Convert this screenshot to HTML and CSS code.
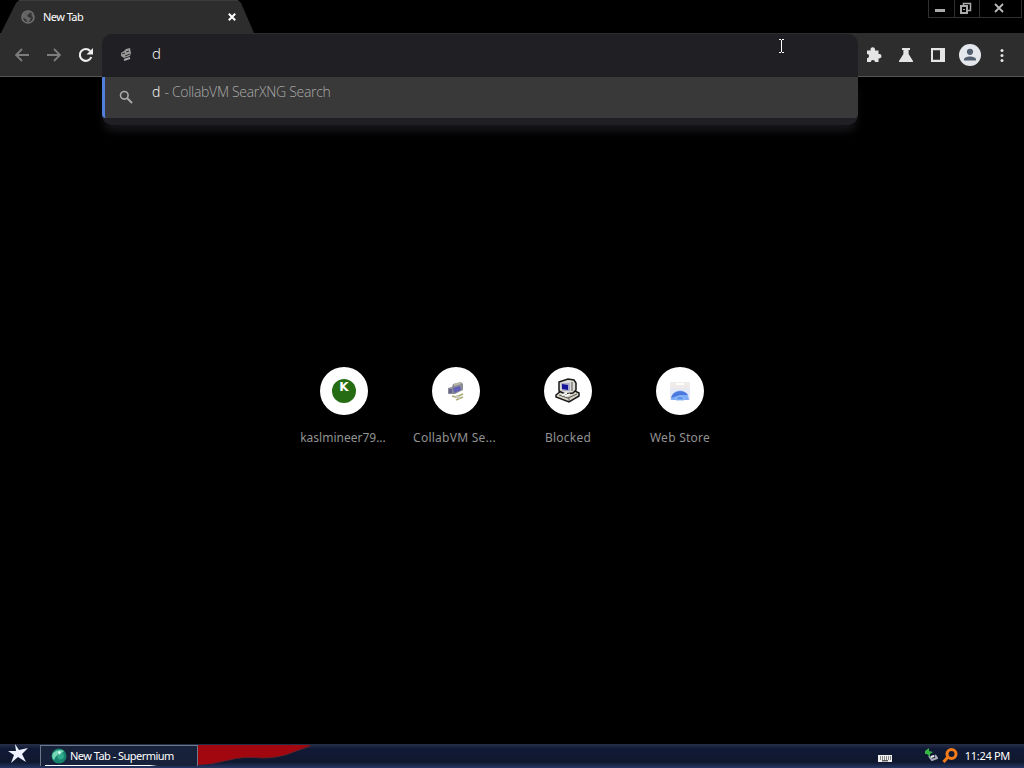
FILE: index.html
```
<!DOCTYPE html>
<html lang="en">
<head>
    <meta charset="UTF-8">
    <meta name="viewport" content="width=device-width, initial-scale=1.0">
    <title>New Tab</title>
    <link rel="stylesheet" href="styles.css">
</head>
<body>
<div class="titlebar">
    <svg class="tab-shape" width="256" height="33" viewBox="0 0 256 33"><path d="M0 33 L1 33 L16 3 Q18 0 21 0 H236 Q239 0 241 3 L254 33Z" fill="#2d2d2d"/><path d="M19 .5H238" stroke="#3b3b3b"/></svg>
    <div class="tab">
        <svg width="14" height="14" viewBox="0 0 14 14"><circle cx="7" cy="7" r="6" fill="#333" stroke="#707070" stroke-width="1.6"/><path d="M2 4 6 2 9 2 8 4 6 5 7 7 10 8 8 12 6 12 5 9 2 8Z" fill="#656565"/><path d="M10 4 13 5 12 8Z" fill="#656565"/></svg>
        <span class="tab-title">New Tab</span>
        <svg class="tab-close" width="8" height="8" viewBox="0 0 8 8"><path d="M.8.8 7.2 7.2M7.2.8.8 7.2" stroke="#fff" stroke-width="2"/></svg>
    </div>
    <div class="window-buttons">
        <div class="win-btn"><svg width="25" height="17" viewBox="0 0 25 17"><path d="M6 10.5H16" stroke="#aaa" stroke-width="3"/></svg></div>
        <div class="win-btn"><svg width="24" height="17" viewBox="0 0 24 17"><path d="M8.5 6V3.5H15.5V10.5H13" fill="none" stroke="#aaa" stroke-width="1.5"/><rect x="6" y="6" width="6" height="7" fill="#000" stroke="#aaa" stroke-width="2"/><path d="M8 9.5H10" stroke="#aaa"/></svg></div>
        <div class="win-btn wide"><svg width="41" height="17" viewBox="0 0 41 17"><path d="M15 4 23 12M23 4 15 12" stroke="#bbb" stroke-width="1.8"/></svg></div>
    </div>
</div>

<div class="toolbar">
    <div class="nav">
        <svg width="16" height="16" viewBox="0 0 16 16"><path d="M15 8H2M8 2 2 8 8 14" fill="none" stroke="#7c7c7c" stroke-width="1.8"/></svg>
        <svg width="16" height="16" viewBox="0 0 16 16"><path d="M1 8H14M8 2 14 8 8 14" fill="none" stroke="#7c7c7c" stroke-width="1.8"/></svg>
        <svg width="16" height="16" viewBox="0 0 16 16"><path d="M13.3 10A5.9 5.9 0 1 1 12.2 4" fill="none" stroke="#eee" stroke-width="2.1"/><path d="M15 1V7.5H8.5Z" fill="#eee"/></svg>
    </div>
    <div class="omnibox">
        <svg width="16" height="16" viewBox="0 0 16 16"><path d="M3 6 6 4 8 2 12 1 13 6 12 9 6 11 3 9Z" fill="#999"/><path d="M4 7 7 6M7 9 12 7M8 5 11 4" stroke="#333"/><path d="M6 13 12 11" stroke="#aaa" stroke-width="2"/></svg>
        <span class="query">d</span>
    </div>
    <div class="actions">
        <svg width="16" height="16" viewBox="0 0 16 16"><path d="M1 3.5H4.7A2.3 2.3 0 1 1 8.8 3.5H12.5V7A2.3 2.3 0 1 1 12.5 11.4V15H9A2.1 2.1 0 0 0 4.8 15H1V11.2A2.1 2.1 0 0 0 1 7Z" fill="#e5e5e5"/></svg>
        <svg width="16" height="16" viewBox="0 0 16 16"><path d="M4 1H12V3H10.6V7L15 14V15H1V14L5.4 7V3H4Z" fill="#e5e5e5"/></svg>
        <svg width="16" height="16" viewBox="0 0 16 16"><path d="M1 1H15V15H1ZM3 3.2V12.8H10V3.2Z" fill="#e5e5e5" fill-rule="evenodd"/></svg>
        <svg class="avatar" width="22" height="22" viewBox="0 0 22 22"><circle cx="11" cy="11" r="11" fill="#e4e7ec"/><circle cx="11" cy="7.8" r="3.1" fill="#525f70"/><path d="M5 16.5V15.5C5 11.5 17 11.5 17 15.5V16.5Z" fill="#525f70"/></svg>
        <svg class="menu" width="4" height="16" viewBox="0 0 4 16"><g fill="#e5e5e5"><circle cx="2" cy="3.5" r="1.5"/><circle cx="2" cy="8.5" r="1.5"/><circle cx="2" cy="13.5" r="1.5"/></g></svg>
    </div>
    <div class="suggestions">
        <div class="suggestion">
            <svg width="14" height="14" viewBox="0 0 14 14"><circle cx="5.3" cy="5.3" r="3.8" fill="none" stroke="#aaa" stroke-width="1.6"/><path d="M8 8 13 13" stroke="#aaa" stroke-width="2"/></svg>
            <p><span class="typed">d</span><span class="engine"> - CollabVM SearXNG Search</span></p>
        </div>
    </div>
</div>
<svg class="text-cursor" width="7" height="14" viewBox="0 0 7 14"><path d="M1 .5H3M4 .5H6M3.5 1V13M1 13.5H3M4 13.5H6" stroke="#fff"/></svg>

<main class="new-tab">
    <div class="shortcut">
        <div class="circle"><div class="letter-icon">K</div></div>
        <span class="tight">kaslmineer79...</span>
    </div>
    <div class="shortcut">
        <div class="circle"><svg width="24" height="24" viewBox="0 0 24 24"><path d="M4 9 8 8 9 5 17 3 19 5V11L11 15 4 15Z" fill="#8b8d96"/><path d="M9 9 16 7 17 11 10 14Z" fill="#6260b6"/><path d="M5 10 8 10V14L5 14Z" fill="#66658f"/><path d="M10 6 17 4" stroke="#b9b9a5" stroke-width="2"/><path d="M8 17 12 18 19 15M12 21 19 18" fill="none" stroke="#acac77" stroke-width="1.7"/><path d="M12 17 16 19" stroke="#c9cbc5" stroke-width="2"/></svg></div>
        <span class="searx">CollabVM Se...</span>
    </div>
    <div class="shortcut">
        <div class="circle"><svg width="26" height="26" viewBox="0 0 26 26"><path d="M1 17 6 13 18 12 24 15V18L14 24 1 19Z" fill="#ddd9c8" stroke="#171717" stroke-width="1.5"/><path d="M4 4 13 1 19 2 21 5V12L18 15 10 16 4 13Z" fill="#deddd5" stroke="#171717" stroke-width="1.5"/><path d="M6 5 15 5 15 13 7 13Z" fill="#aaaaca"/><path d="M7 6 13 7V12L7 11Z" fill="#16169b"/><path d="M17 4V13M4 17 13 20 22 16M14 20V23" fill="none" stroke="#666" stroke-width="1.2"/><path d="M7 17 12 15M10 18 15 16" stroke="#fff" stroke-width="1.5"/></svg></div>
        <span>Blocked</span>
    </div>
    <div class="shortcut">
        <div class="circle"><svg width="24" height="24" viewBox="0 0 24 24"><path d="M2 3H22V21H2Z" fill="#e6e8f5"/><path d="M2 3H22V9H2Z" fill="#eeebe8"/><path d="M8 5H16" stroke="#fff" stroke-width="2"/><path d="M3 21A9 9.5 0 0 1 21 21Z" fill="#7eacf5"/><path d="M3 19A9.3 8 0 0 1 20 16L12 16Z" fill="#4979dc"/><path d="M8 21A4 4 0 0 1 16 21Z" fill="#5a96ed" stroke="#98bbf5"/></svg></div>
        <span>Web Store</span>
    </div>
</main>

<footer class="taskbar">
    <svg class="ribbon" width="124" height="24" viewBox="0 0 124 24"><path d="M0 1H113L98 7Q82 14 65 14Q45 12 31 16L12 20 0 21Z" fill="#a2060e"/><path d="M113 2L98 7Q82 14 65 14Q45 12 31 16L12 20" fill="none" stroke="#672029"/></svg>
    <svg class="start" width="22" height="22" viewBox="0 0 22 22"><path d="M8 1 12 7 21 5 15 11 19 19 11 14 4 20 7 12 1 8 9 8Z" fill="#eef1ff"/></svg>
    <div class="task">
        <svg width="16" height="16" viewBox="0 0 16 16"><circle cx="8" cy="8" r="7.5" fill="#16836f"/><path d="M2 5Q7 0 13 3L9 7 5 8 3 12Q0 9 2 5Z" fill="#76d8b7"/><circle cx="9.5" cy="8" r="3.4" fill="#31a98c"/><path d="M7 4 9 3 10 5 8 7Z" fill="#d9fff1"/></svg>
        <span>New Tab - Supermium</span>
    </div>
    <div class="tray">
        <svg class="keyboard" width="14" height="8" viewBox="0 0 14 8"><path d="M0 1H14V8H0Z" fill="#f0f0f0"/><path d="M2 3H13M2 5H13" stroke="#222" stroke-dasharray="1 1"/><path d="M4 6.8H10" stroke="#222"/></svg>
        <svg class="device" width="14" height="14" viewBox="0 0 14 14"><path d="M5 8 8 12 13 10 11 7" fill="none" stroke="#aaaebc" stroke-width="2"/><path d="M1 3 5 0V3L9 4 6 6V9L3 6 1 6Z" fill="#37b545"/><path d="M7 9 10 8" stroke="#eee" stroke-width="2"/></svg>
        <svg class="search-tool" width="16" height="16" viewBox="0 0 16 16"><circle cx="9.5" cy="6" r="4.5" fill="none" stroke="#f57c18" stroke-width="3"/><path d="M6 9 1.5 14" stroke="#f57c18" stroke-width="3"/></svg>
        <time>11:24 PM</time>
    </div>
</footer>
</body>
</html>
```
FILE: styles.css
```
* {
    box-sizing: border-box;
}
body {
    margin: 0;
    width: 1024px;
    height: 768px;
    display: flex;
    flex-direction: column;
    overflow: hidden;
    background: #000;
    color: #fff;
    font-family: "Noto Sans", sans-serif;
}
svg {
    display: block;
    flex: none;
}
span, time {
    white-space: pre;
}
.titlebar {
    position: relative;
    display: flex;
    justify-content: space-between;
    height: 33px;
}
.tab-shape {
    position: absolute;
    left: 0;
    top: 0;
}
.tab {
    position: relative;
    display: flex;
    align-items: center;
    width: 254px;
    height: 34px;
    padding: 0 18px 0 21px;
}
.tab-title {
    margin: 0 0 2px 8px;
    font-size: 11px;
    letter-spacing: -0.55px;
}
.tab-close {
    margin-left: auto;
}
.window-buttons {
    display: flex;
    height: 18px;
    margin-right: 3px;
    margin-right: 2px;
    border: 1px solid #303030;
    border-top: 0;
}
.win-btn + .win-btn {
    border-left: 1px solid #303030;
}
.toolbar {
    position: relative;
    display: flex;
    height: 44px;
    background: #2d2d2d;
    border-bottom: 1px solid #555;
}
.nav {
    display: flex;
    gap: 16px;
    width: 102px;
    padding: 14px 0 0 14px;
}
.omnibox {
    display: flex;
    width: 756px;
    height: 43px;
    margin-top: 1px;
    padding: 13px 0 0 16px;
    background: #202024;
    border-radius: 10px 10px 0 0;
    z-index: 1;
}
.query {
    margin: -5px 0 0 18px;
    font: 300 15px/22px "Open Sans", sans-serif;
}
.actions {
    display: flex;
    align-items: center;
    gap: 16px;
    padding-left: 8px;
}
.avatar {
    margin: 0 -3px;
}
.menu {
    margin-left: 6px;
}
.suggestions {
    position: absolute;
    z-index: 2;
    left: 102px;
    top: 44px;
    width: 756px;
    height: 48px;
    padding-bottom: 7px;
    background: #202024;
    border-radius: 0 0 10px 10px;
    box-shadow: 0 8px 10px -2px #17171b;
}
.suggestion {
    display: flex;
    height: 41px;
    padding: 13px 0 0 14px;
    background: #393939;
    border-left: 3px solid #527edb;
    border-radius: 0 0 4px 4px;
}
.suggestion p {
    margin: -9px 0 0 19px;
    font: 300 14px/22px "Open Sans", sans-serif;
    letter-spacing: -0.3px;
}
.typed {
    margin-right: 1px;
    color: #fff;
}
.engine {
    color: #aaa;
}
.text-cursor {
    position: absolute;
    z-index: 3;
    left: 778px;
    top: 39px;
}
.new-tab {
    display: flex;
    flex: 1;
    justify-content: center;
    padding-top: 290px;
}
.shortcut {
    display: flex;
    flex-direction: column;
    align-items: center;
    width: 112px;
    color: #929292;
    font-size: 12px;
    line-height: 18px;
    letter-spacing: 0.25px;
}
.shortcut .tight {
    margin-left: -2px;
    letter-spacing: 0;
}
.shortcut .searx {
    margin-left: -3px;
}
.circle {
    display: flex;
    justify-content: center;
    align-items: center;
    width: 48px;
    height: 48px;
    margin-bottom: 14px;
    border-radius: 50%;
    background: #fff;
}
.letter-icon {
    width: 24px;
    height: 24px;
    border-radius: 50%;
    background: #256c13;
    color: #fff;
    font: bold 12px/16px "DejaVu Sans", sans-serif;
    letter-spacing: 0;
    text-align: center;
}
.taskbar {
    position: relative;
    display: flex;
    align-items: flex-start;
    height: 24px;
    background: linear-gradient(#273047, #111a35 20%, #10182f 75%, #263865);
    font-size: 11px;
}
.ribbon {
    position: absolute;
    left: 198px;
    top: 0;
}
.start {
    margin: -1px 0 0 7px;
}
.task {
    display: flex;
    align-items: center;
    gap: 3px;
    width: 158px;
    height: 21px;
    margin: 1px 0 0 11px;
    padding-left: 10px;
    background: linear-gradient(90deg, #fff 0, #fff 70%, transparent 75%) 4px 100% / 150px 1px no-repeat #17213a;
    border: solid #6e7689;
    border-width: 1px 1px 0 1px;
    letter-spacing: -0.53px;
}
.task span {
    margin-bottom: 1px;
}
.tray {
    display: flex;
    align-items: center;
    height: 24px;
    margin-left: auto;
    padding-right: 14px;
    letter-spacing: -0.3px;
}
.tray time {
    margin-bottom: 1px;
}
.keyboard {
    margin: 4px 32px 0 0;
}
.device {
    margin: 0 4px 2px 0;
}
.search-tool {
    margin-right: 7px;
}
```
